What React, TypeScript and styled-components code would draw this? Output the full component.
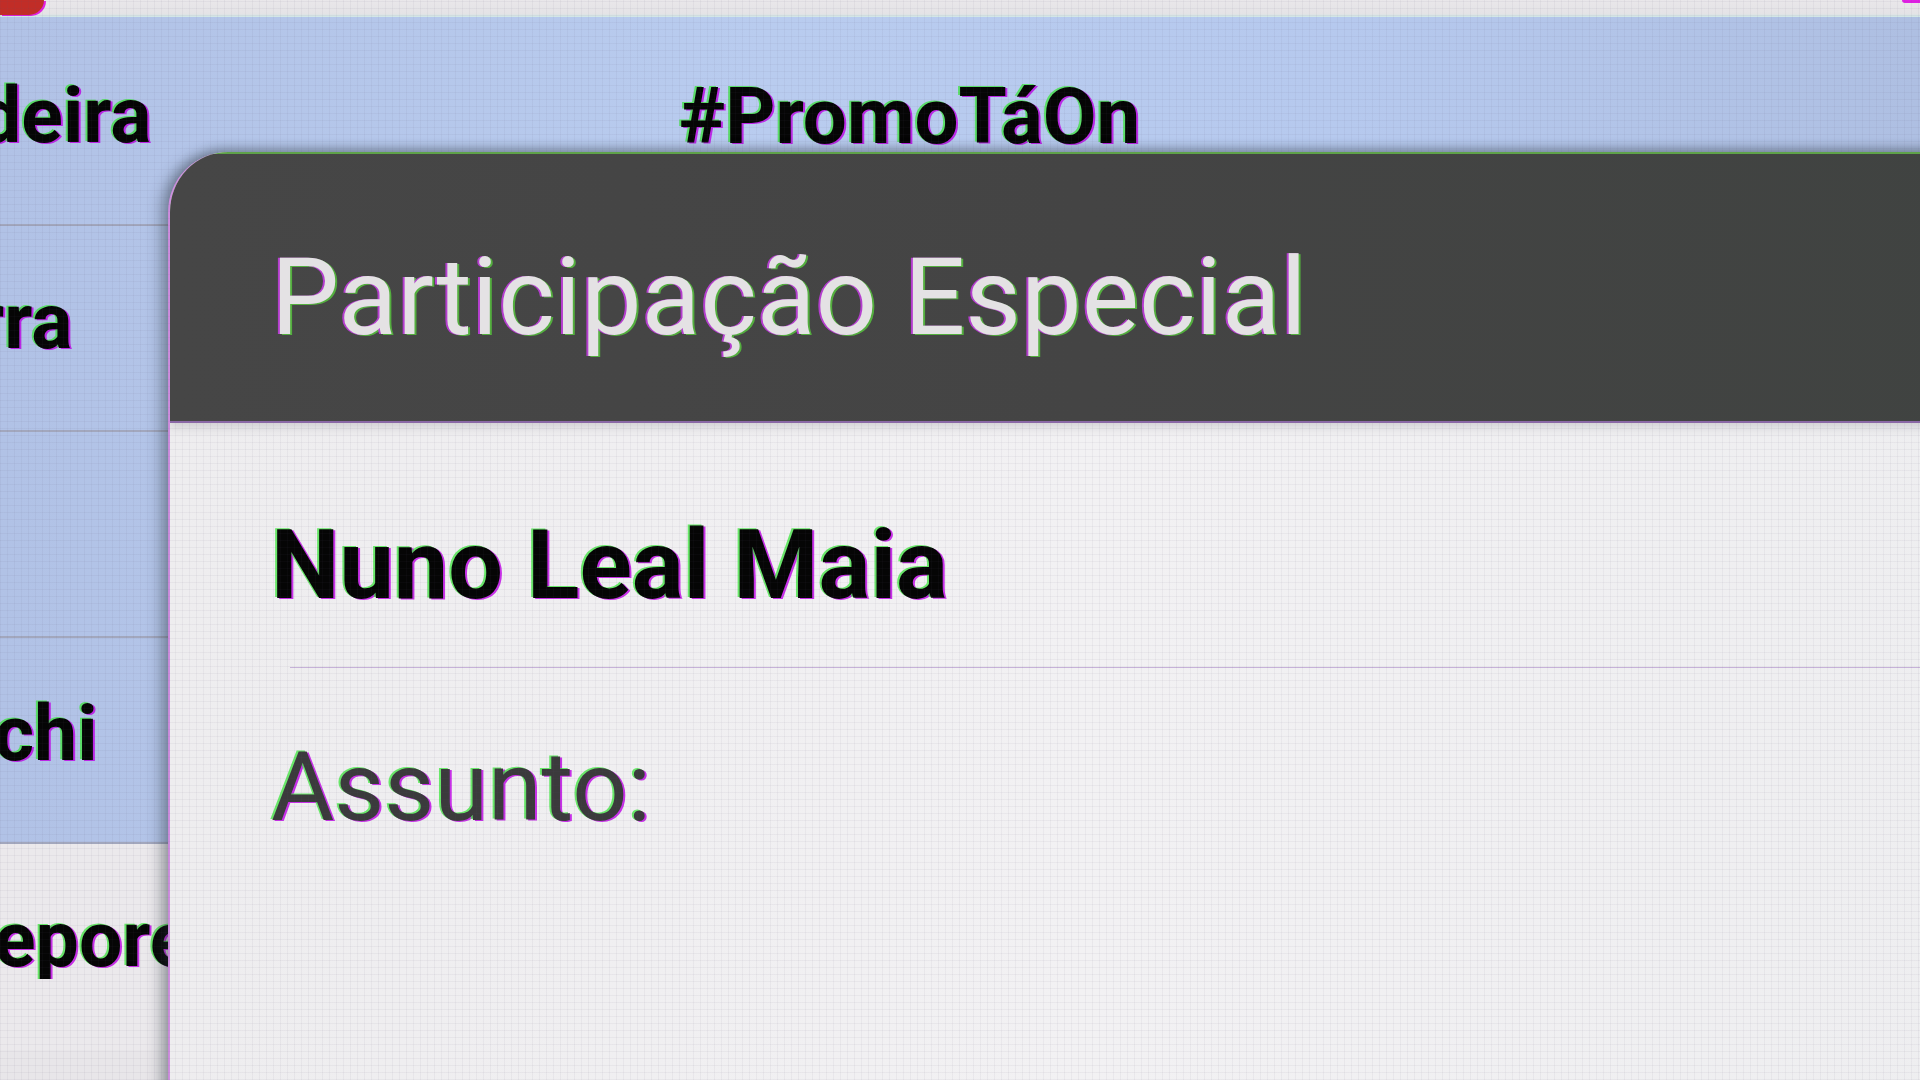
import React from "react";
import styled, { createGlobalStyle, css } from "styled-components";

const GlobalStyle = createGlobalStyle`
  html, body { margin: 0; padding: 0; background: #e8e6e9; }
  body { overflow: hidden; font-family: Roboto, "Noto Sans", Arial, sans-serif; }
  * { box-sizing: border-box; }
`;

const darkFringe = css`
  text-shadow: -2px -1px 0 rgba(60, 230, 60, 0.75), 2px 1px 0 rgba(190, 0, 230, 0.8);
`;
const lightFringe = css`
  text-shadow: -2px 0 0 rgba(200, 60, 230, 0.85), 2px 1px 0 rgba(90, 220, 60, 0.7);
`;

const Screen = styled.div`
  position: relative;
  width: 1920px;
  height: 1080px;
  overflow: hidden;
  background: #e8e6e9;
  display: flex;
  flex-direction: column;
`;

const TopStrip = styled.div`
  height: 17px;
  flex: none;
  display: flex;
  justify-content: space-between;
  align-items: flex-start;
  background: linear-gradient(180deg, #e9e7ea 0%, #e4e3e6 80%, #cfe7e6 100%);
`;

const RedTab = styled.div`
  width: 44px;
  height: 15px;
  background: #c12d27;
  border-bottom-right-radius: 16px;
  box-shadow: 2px 1px 0 #e21fe0;
`;

const CornerMark = styled.div`
  width: 18px;
  height: 3px;
  background: #e11fe4;
  border-bottom-left-radius: 3px;
`;

const List = styled.div`
  display: flex;
  flex-direction: column;
`;

const Row = styled.div<{ $tone: "blue" | "gray"; $tall?: boolean; $last?: boolean }>`
  height: ${(p) => (p.$tall ? 209 : 206)}px;
  flex: none;
  display: grid;
  grid-template-columns: 168px 1fr;
  align-items: start;
  padding-top: ${(p) => (p.$tall ? 61 : 58)}px;
  border-bottom: 2px solid
    ${(p) => (p.$last ? "transparent" : p.$tone === "blue" ? "#a2a7bd" : "#c9c5cc")};
  background: ${(p) =>
    p.$tone === "blue"
      ? "linear-gradient(90deg, #b1c2e6 0%, #b9ccef 40%, #b6c9ee 70%, #aebfe2 100%)"
      : "#ebe9ec"};
`;

const NameCell = styled.div<{ $shift: number }>`
  overflow: hidden;
  white-space: nowrap;
  font-family: Roboto, "Noto Sans", sans-serif;
  font-weight: 700;
  font-size: 77px;
  line-height: 77px;
  color: #050505;
  margin-left: ${(p) => p.$shift}px;
  ${darkFringe}
`;

const TitleCell = styled.div`
  padding-left: 511px;
  white-space: nowrap;
  font-family: Roboto, "Noto Sans", sans-serif;
  font-weight: 700;
  font-size: 78px;
  line-height: 77px;
  color: #050505;
  ${darkFringe}
`;

const Modal = styled.div`
  position: absolute;
  left: 168px;
  top: 152px;
  right: -80px;
  bottom: -80px;
  border-top-left-radius: 60px;
  overflow: hidden;
  display: flex;
  flex-direction: column;
  background: #efeef0;
  border-left: 2px solid #cf8ee0;
  box-shadow: -8px 0 14px rgba(40, 50, 60, 0.35), 0 -4px 10px rgba(40, 50, 60, 0.25);
`;

const ModalHeader = styled.div`
  position: relative;
  z-index: 1;
  height: 271px;
  flex: none;
  display: flex;
  align-items: flex-start;
  padding: 89px 0 0 101px;
  background: linear-gradient(90deg, #464646 0%, #444444 50%, #404341 100%);
  border-top: 2px solid #5fa24a;
  border-bottom: 2px solid #8a68a6;
  box-shadow: 0 4px 10px rgba(60, 60, 70, 0.18);
`;

const HeaderTitle = styled.h1`
  margin: 0;
  font-family: Roboto, "Noto Sans", sans-serif;
  font-weight: 400;
  font-size: 108px;
  line-height: 108px;
  color: #e4e2e4;
  white-space: nowrap;
  ${lightFringe}
`;

const ModalBody = styled.div`
  flex: 1;
  display: flex;
  flex-direction: column;
  padding-top: 94px;
  background: linear-gradient(90deg, #eeedef 0%, #f2f1f3 50%, #eeeef0 100%);
`;

const GuestName = styled.div`
  padding-left: 101px;
  font-family: Roboto, "Noto Sans", sans-serif;
  font-weight: 700;
  font-size: 97px;
  line-height: 97px;
  color: #050505;
  white-space: nowrap;
  ${darkFringe}
`;

const Divider = styled.div`
  margin: 53px 0 0 120px;
  height: 1px;
  background: #c6b2d8;
`;

const FieldLabel = styled.div`
  margin-top: 71px;
  padding-left: 101px;
  font-family: Roboto, "Noto Sans", sans-serif;
  font-weight: 400;
  font-size: 97px;
  line-height: 97px;
  color: #3b3a3c;
  white-space: nowrap;
  ${darkFringe}
`;

const PixelGrid = styled.div`
  position: absolute;
  inset: 0;
  pointer-events: none;
  background-image:
    repeating-linear-gradient(0deg, rgba(90, 80, 110, 0.06) 0 1px, transparent 1px 7px),
    repeating-linear-gradient(90deg, rgba(90, 80, 110, 0.06) 0 1px, transparent 1px 7px);
`;

const rows: { text: string; tone: "blue" | "gray"; shift: number; title?: string }[] = [
  { text: "deira", tone: "blue", shift: -22, title: "#PromoTáOn" },
  { text: "rra", tone: "blue", shift: -24 },
  { text: "", tone: "blue", shift: 0 },
  { text: "chi", tone: "blue", shift: -6 },
  { text: "epore", tone: "gray", shift: -6 },
];

export default function App() {
  return (
    <>
      <GlobalStyle />
      <Screen>
        <TopStrip>
          <RedTab />
          <CornerMark />
        </TopStrip>
        <List>
          {rows.map((r, i) => (
            <Row key={i} $tone={r.tone} $tall={i === 0} $last={i === rows.length - 1}>
              <NameCell $shift={r.shift}>{r.text}</NameCell>
              {r.title ? <TitleCell>{r.title}</TitleCell> : <div />}
            </Row>
          ))}
        </List>
        <Modal>
          <ModalHeader>
            <HeaderTitle>Participação Especial</HeaderTitle>
          </ModalHeader>
          <ModalBody>
            <GuestName>Nuno Leal Maia</GuestName>
            <Divider />
            <FieldLabel>Assunto:</FieldLabel>
          </ModalBody>
        </Modal>
        <PixelGrid />
      </Screen>
    </>
  );
}
